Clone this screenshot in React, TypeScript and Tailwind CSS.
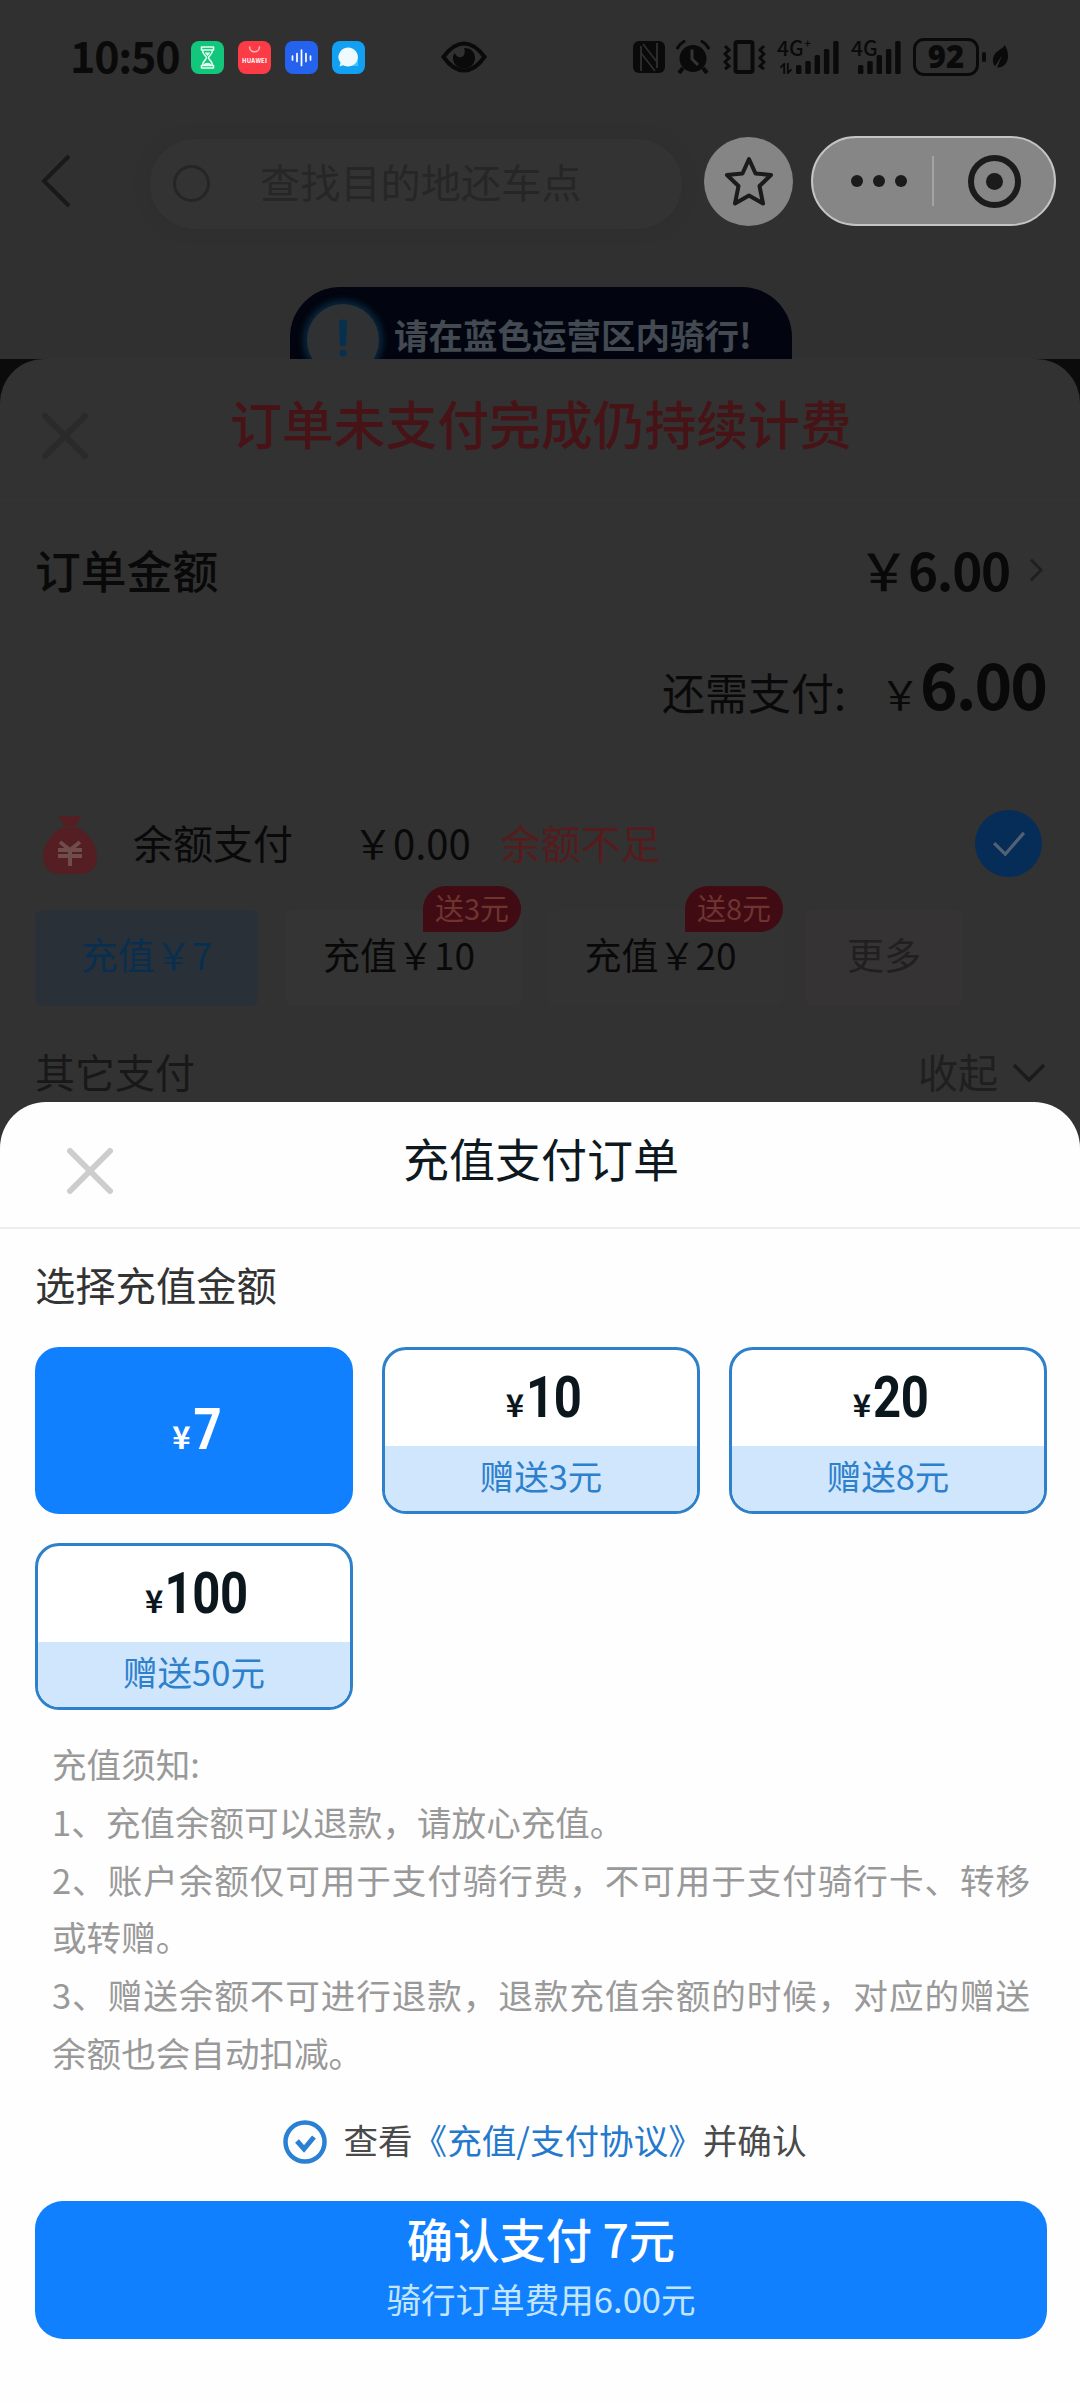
import React, { useState } from 'react';

interface Plan {
  amount: number;
  bonus?: number;
}

const PLANS: Plan[] = [
  { amount: 7 },
  { amount: 10, bonus: 3 },
  { amount: 20, bonus: 8 },
  { amount: 100, bonus: 50 },
];

const NOTES = [
  '充值须知:',
  '1、充值余额可以退款，请放心充值。',
  '2、账户余额仅可用于支付骑行费，不可用于支付骑行卡、转移或转赠。',
  '3、赠送余额不可进行退款，退款充值余额的时候，对应的赠送余额也会自动扣减。',
];

const CrossIcon: React.FC<{ className?: string }> = ({ className }) => (
  <svg viewBox="0 0 46 46" className={className} fill="none" stroke="currentColor" strokeWidth="6" strokeLinecap="round">
    <path d="M3 3l40 40M43 3L3 43" />
  </svg>
);

const SignalBars: React.FC<{ heights: number[]; className: string }> = ({ heights, className }) => (
  <svg viewBox="0 0 44 33" className={className} fill="currentColor">
    {heights.map((h, i) => (
      <rect key={i} x={i * 9.3} y={33 - h} width="5.4" height={h} rx="1.5" />
    ))}
  </svg>
);

const StatusBar: React.FC = () => (
  <div className="flex h-[114px] items-center pl-[70px] text-[#0a0a0a]">
    <span className="w-[121px] pb-[6px] text-[43px] leading-none font-bold tracking-[-1.2px]">10:50</span>
    <div className="flex gap-[14px]">
      <svg viewBox="0 0 33 33" className="size-[33px]">
        <rect width="33" height="33" rx="8" fill="#12c67c" />
        <g fill="none" stroke="#e4fff1" strokeWidth="1.6" strokeLinejoin="round">
          <path d="M10.5 6h12v3h-12zM10.5 24.5h12v2.5h-12zM11.5 9c0 5 4 5.5 4 7.7s-4 3-4 7.5M21.5 9c0 5-4 5.5-4 7.7s4 3 4 7.5" />
        </g>
        <path d="M13.5 11.5h6l-3 3.5zM12.5 24c1-3 7-3 8 0z" fill="#e4fff1" />
      </svg>
      <svg viewBox="0 0 33 33" className="size-[33px]">
        <rect width="33" height="33" rx="8" fill="#fb3b46" />
        <path d="M11.5 5.5c0 7 10 7 10 0" fill="none" stroke="#ffb9bc" strokeWidth="1.5" />
        <text x="16.5" y="22" textAnchor="middle" fontSize="6" fontWeight="700" fill="#fff" textLength="25">HUAWEI</text>
      </svg>
      <svg viewBox="0 0 33 33" className="size-[33px]">
        <rect width="33" height="33" rx="8" fill="#2563ee" />
        <path d="M7.5 15v4M12 12.5v8M16.5 9v15.5M21 12.5v8M25.5 15v4" stroke="#fff" strokeWidth="1.7" strokeLinecap="round" />
      </svg>
      <svg viewBox="0 0 33 33" className="size-[33px]">
        <rect width="33" height="33" rx="8" fill="#12a0f2" />
        <path d="M12 25h14V15z" fill="#45c3fb" />
        <path d="M16 6.5a10 9.5 0 1 1-5 17.8L7.5 25.5l1-3.8A10 9.5 0 0 1 16 6.5z" fill="#effaff" />
      </svg>
    </div>
    <svg viewBox="0 0 46 32" className="ml-[76px] h-[32px] w-[46px]">
      <path d="M2.5 16C9 7 16 2.5 23 2.5S37 7 43.5 16C37 25 30 29.5 23 29.5S9 25 2.5 16z" fill="none" stroke="currentColor" strokeWidth="4" />
      <path d="M23 7c8 0 11 5 11 10 0 6-5 10.5-11 10.5S12 23 12 17c0-2 .6-3.5 1.7-5 1.3 3 4 5 6.8 4 3.5-1.2 4-6 2.5-9z" fill="currentColor" />
    </svg>
    <div className="ml-[146px] flex items-center">
      <svg viewBox="0 0 32 32" className="size-[32px]">
        <rect width="32" height="32" rx="6" fill="currentColor" />
        <path d="M8 30V5M24 27V2" fill="none" stroke="#303030" strokeWidth="1.8" />
        <path d="M10 3l14 18M8 12l14 18" stroke="#303030" strokeWidth="1.6" />
      </svg>
      <svg viewBox="0 0 34 34" className="ml-[11px] size-[34px]" fill="none" stroke="currentColor">
        <circle cx="17" cy="18.5" r="13.5" fill="currentColor" stroke="none" />
        <path d="M1.5 8C3 5 5 3 8 1.5M32.5 8C31 5 29 3 26 1.5" strokeWidth="3" strokeLinecap="round" />
        <path d="M7 28l-4 5M27 28l4 5" strokeWidth="4" />
        <path d="M16 9.5V19l6 6" stroke="#343434" strokeWidth="3" />
      </svg>
      <svg viewBox="0 0 43 34" className="ml-[13px] h-[34px] w-[43px]" fill="none" stroke="currentColor">
        <rect x="12.5" y="2" width="17" height="30" rx="2" strokeWidth="4" />
        <path d="M2 6l4 4-4 4 4 4-4 4 4 4-4 3M41 6l-4 4 4 4-4 4 4 4-4 4 4 3" strokeWidth="3" />
      </svg>
      <div className="relative ml-[11px] flex h-[34px] w-[63px] items-end justify-end">
        <span className="absolute -top-[3px] left-0 text-[21px] leading-none font-medium">4G⁺</span>
        <svg viewBox="0 0 14 12" className="absolute bottom-0 left-[2px] h-[11px] w-[14px]" stroke="currentColor" strokeWidth="2" fill="none">
          <path d="M1 5l4-4v11M9 0v11l4-4" />
        </svg>
        <SignalBars heights={[9, 13, 19, 25, 33]} className="h-[33px] w-[44px]" />
      </div>
      <div className="relative ml-[11px] flex h-[34px] w-[51px] items-end justify-end">
        <span className="absolute -top-[3px] left-0 text-[21px] leading-none font-medium">4G</span>
        <SignalBars heights={[9, 13, 19, 25, 33]} className="h-[33px] w-[44px]" />
      </div>
      <div className="ml-[11px] flex h-[38px] w-[66px] items-center justify-center rounded-[11px] border-[3px] border-current pb-[2px] font-['Open_Sans','Noto_Sans_CJK_SC',sans-serif] text-[31px] leading-none font-extrabold">
        92
      </div>
      <div className="ml-[3px] h-[10px] w-[4px] rounded-full bg-current" />
      <svg viewBox="0 0 20 30" className="ml-[6px] h-[28px] w-[17px]">
        <path d="M15 1c5 8 5 17 1 22-3 4-8 5-10 4L12 13 3.5 26C-1 20 1 12 7 8c4-3 7-4 8-7z" fill="currentColor" />
      </svg>
    </div>
  </div>
);

const NavBar: React.FC = () => (
  <div className="flex h-[134px] items-center pl-[41px]">
    <svg viewBox="0 0 30 54" className="h-[54px] w-[30px]" fill="none" stroke="#191919" strokeWidth="4">
      <path d="M28 2L3 27l25 25" />
    </svg>
    <div className="mt-[5px] ml-[79px] flex h-[90px] w-[532px] items-center rounded-full bg-[#333333] pl-[23px] shadow-[0_0_14px_#2e2e2e]">
      <div className="size-[37px] rounded-full border-[3px] border-[#252525]" />
      <span className="ml-[50px] pb-[4px] text-[40.2px] leading-none text-[#262626]">查找目的地还车点</span>
    </div>
    <div className="ml-[22px] flex size-[89px] items-center justify-center rounded-full bg-[#858585]">
      <svg viewBox="0 0 50 50" className="size-[50px]" fill="none" stroke="#1b1b1b" strokeWidth="4" strokeLinejoin="round">
        <path d="M25 3l6.5 14.5L47 19 35.5 30 39 47.5 25 39.5 11 47.5 14.5 30 3 19l15.5-1.5z" />
      </svg>
    </div>
    <div className="ml-[18px] flex h-[90px] w-[245px] items-center rounded-full border-2 border-[#c4c4c4] bg-[#868686] pl-[38px]">
      <div className="flex gap-[10px]">
        <i className="size-[12px] rounded-full bg-[#1b1b1b]" />
        <i className="size-[12px] rounded-full bg-[#1b1b1b]" />
        <i className="size-[12px] rounded-full bg-[#1b1b1b]" />
      </div>
      <div className="ml-[25px] h-[50px] w-[2px] bg-[#a3a3a3]" />
      <div className="ml-[34px] flex size-[53px] items-center justify-center rounded-full border-[6px] border-[#1b1b1b]">
        <i className="size-[17px] rounded-full bg-[#1b1b1b]" />
      </div>
    </div>
  </div>
);

const AreaToast: React.FC = () => (
  <div className="mt-[39px] ml-[290px] flex h-[72px] w-[502px] items-start overflow-hidden rounded-t-[50px] bg-[#02050f]">
    <div className="mt-[17px] ml-[17px] flex size-[72px] shrink-0 items-center justify-center rounded-full bg-[#2f3133] shadow-[0_0_6px_4px_#08263d]">
      <svg viewBox="0 0 10 38" className="-mt-[4px] h-[38px] w-[10px]" fill="#07304f">
        <path d="M1 2q4-3 8 0L8 27H2z" />
        <circle cx="5" cy="34" r="3.5" />
      </svg>
    </div>
    <span className="mt-[30px] ml-[15px] text-[34.5px] leading-none font-bold whitespace-nowrap text-[#434a52]">请在蓝色运营区内骑行!</span>
  </div>
);

const QuickTag: React.FC<{ label: string }> = ({ label }) => (
  <span className="absolute -top-[24px] right-[1px] flex h-[46px] w-[98px] items-center justify-center rounded-[23px] rounded-bl-none bg-[#400b12] pb-[4px] text-[29px] leading-none text-[#70332f]">
    {label}
  </span>
);

const OrderPanel: React.FC = () => (
  <div className="bg-[#0b0b0b]">
    <div className="h-[790px] rounded-t-[44px] bg-[#323232] text-[#090909]">
      <div className="flex h-[142px] items-start border-b border-[#343434] pl-[42px]">
        <CrossIcon className="mt-[54px] size-[46px] text-[#2a2a2a]" />
        <h2 className="mt-[38px] ml-[142px] text-[51.8px] leading-none font-medium text-[#481316]">订单未支付完成仍持续计费</h2>
      </div>
      <div className="flex h-[140px] items-center pr-[36px] pb-[3px] pl-[35px] leading-none">
        <span className="text-[45.8px] font-medium">订单金额</span>
        <span className="ml-auto text-[51px] font-bold tracking-[-1.2px]">
          <span className="font-medium">￥</span>6.00
        </span>
        <svg viewBox="0 0 16 26" className="ml-[19px] h-[24px] w-[15px]" fill="none" stroke="#1f1f1f" strokeWidth="3">
          <path d="M2 2l11 11L2 24" />
        </svg>
      </div>
      <div className="flex h-[130px] items-baseline justify-end pt-[9px] pr-[34px] leading-none">
        <span className="text-[43px]">还需支付:</span>
        <span className="ml-[34px] text-[40px]">￥</span>
        <span className="text-[64px] font-bold tracking-[-2px]">6.00</span>
      </div>
      <div className="flex h-[139px] items-center pt-[6px] pr-[38px] pl-[43px] text-[40px] leading-none">
        <svg viewBox="0 0 54 60" className="h-[60px] w-[54px]">
          <path d="M15 1q12 3 24 0l-6 11H21z" fill="#541e22" />
          <path d="M20 13h14c11 5 20 18 20 30 0 12-8 17-17 17H17C8 60 0 55 0 43 0 31 9 18 20 13z" fill="#541e22" />
          <path d="M17 28l10 8 10-8M15 36h24M15 42h24M27 36v16" stroke="#6e4d4c" strokeWidth="4" fill="none" />
        </svg>
        <span className="ml-[36px] pb-[3px]">余额支付</span>
        <span className="ml-[60px] pb-[3px]">￥0.00</span>
        <span className="ml-[30px] pb-[3px] text-[#561b1c]">余额不足</span>
        <div className="ml-auto flex size-[67px] items-center justify-center rounded-full bg-[#062d58]">
          <svg viewBox="0 0 36 28" className="h-[26px] w-[34px]" fill="none" stroke="#526273" strokeWidth="3.5">
            <path d="M2 13l12 12L34 2" />
          </svg>
        </div>
      </div>
      <div className="flex items-center pl-[35px] text-[37px] leading-none">
        <div className="flex h-[96px] w-[223px] items-center justify-center rounded-[8px] bg-[#2a3037] pb-[7px] text-[#092f50]">充值￥7</div>
        <div className="relative ml-[27px] flex h-[96px] w-[237px] items-center justify-center rounded-[8px] bg-[#343434] pr-[9px] pb-[7px]">
          充值￥10
          <QuickTag label="送3元" />
        </div>
        <div className="relative ml-[24px] flex h-[96px] w-[238px] items-center justify-center rounded-[8px] bg-[#343333] pr-[9px] pb-[7px]">
          充值￥20
          <QuickTag label="送8元" />
        </div>
        <div className="ml-[21px] flex h-[96px] w-[158px] items-center justify-center rounded-[8px] bg-[#353333] pb-[7px] text-[#202020]">更多</div>
      </div>
      <div className="flex h-[130px] items-center pr-[34px] pl-[35px] text-[40px] leading-none text-[#181818]">
        <span>其它支付</span>
        <span className="ml-auto text-[#1f1f1f]">收起</span>
        <svg viewBox="0 0 34 20" className="mt-[4px] ml-[14px] h-[20px] w-[34px]" fill="none" stroke="#1b1b1b" strokeWidth="3.5">
          <path d="M2 2l15 15L32 2" />
        </svg>
      </div>
    </div>
  </div>
);

interface PlanCardProps {
  plan: Plan;
  selected: boolean;
  onSelect: () => void;
}

const PlanCard: React.FC<PlanCardProps> = ({ plan, selected, onSelect }) => {
  // the squeezed digits leave a gap on their left, pull it back per digit
  const squeeze = String(plan.amount).length * -5;

  return (
    <button
      onClick={onSelect}
      className={`flex h-[167px] flex-col overflow-hidden rounded-[24px] border-[3px] ${
        selected ? 'border-[#1080ff] bg-[#1080ff] text-white' : 'border-[#2d80c9] bg-white text-[#0b171d]'
      }`}
    >
      <span className={`flex w-full shrink-0 items-baseline justify-center pt-[1px] pl-[5px] font-bold ${selected ? 'h-[161px]' : 'h-[96px]'}`}>
        <span className={`mr-[3px] text-[31px] ${selected ? 'leading-[170px]' : 'leading-[106px]'}`}>¥</span>
        <span
          className="origin-right scale-x-[0.86] font-[Roboto,sans-serif] text-[57px] leading-none tracking-[-0.5px]"
          style={{ marginLeft: squeeze }}
        >
          {plan.amount}
        </span>
      </span>
      {plan.bonus && !selected && (
        <span className="flex h-[65px] w-full shrink-0 items-center justify-center bg-[#cfe6fd] pb-[6px] text-[34.5px] leading-none text-[#2d80cb]">
          赠送{plan.bonus}元
        </span>
      )}
    </button>
  );
};

const App: React.FC = () => {
  const [selected, setSelected] = useState<number>(7);
  const [agreed, setAgreed] = useState<boolean>(true);

  return (
    <div className="h-[2403px] w-[1080px] overflow-hidden bg-[#303030] font-['Noto_Sans_CJK_SC',sans-serif]">
      <StatusBar />
      <NavBar />
      <AreaToast />
      <OrderPanel />

      <section className="relative -mt-[47px] h-[1301px] rounded-t-[46px] bg-[#fefefe]">
        <header className="flex h-[127px] items-start border-b-2 border-[#ededed] pl-[67px]">
          <CrossIcon className="mt-[46px] size-[46px] text-[#cdcdcd]" />
          <h1 className="mt-[32px] ml-[290px] text-[46px] leading-none text-[#0d191f]">充值支付订单</h1>
        </header>

        <div className="pr-[33px] pl-[35px]">
          <p className="flex h-[118px] items-center pb-[7px] text-[40.3px] leading-none text-[#333]">选择充值金额</p>
          <div className="grid grid-cols-3 gap-[29px]">
            {PLANS.map((plan) => (
              <PlanCard key={plan.amount} plan={plan} selected={plan.amount === selected} onSelect={() => setSelected(plan.amount)} />
            ))}
          </div>

          <div className="mt-[25px] px-[17px] text-justify text-[34.6px] leading-[57.8px] text-[#999]">
            {NOTES.map((note) => (
              <p key={note}>{note}</p>
            ))}
          </div>

          <div className="mt-[27px] flex h-[66px] items-center justify-center pl-[8px] text-[34.6px] leading-none text-[#4a4a4a]">
            <button onClick={() => setAgreed(!agreed)} className="mr-[16px]">
              <svg viewBox="0 0 44 44" className="size-[44px]" fill="none" stroke="#2a80d2" strokeWidth="4.5">
                <circle cx="22" cy="22" r="19.5" />
                {agreed && <path d="M14 21l7 8 10-12" strokeWidth="5" />}
              </svg>
            </button>
            <span className="pb-[4px]">查看</span>
            <a className="pb-[4px] text-[#2479cc]">《充值/支付协议》</a>
            <span className="pb-[4px]">并确认</span>
          </div>

          <button className="mt-[26px] flex h-[138px] w-full flex-col items-center rounded-[28px] bg-[#1080ff] leading-none text-white">
            <span className="mt-[14px] text-[46.3px] font-medium">确认支付 {selected}元</span>
            <span className="mt-[20px] text-[34.6px] text-[#c3e6ff]">骑行订单费用6.00元</span>
          </button>
        </div>
      </section>
    </div>
  );
};

export default App;
